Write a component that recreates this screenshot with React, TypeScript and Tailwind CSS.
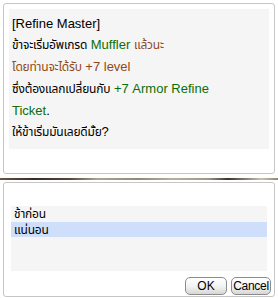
import React from 'react';

const font = {
  fontFamily: '"Liberation Sans", Arial, "Noto Sans Thai", "Noto Sans Thai UI", Loma, Garuda, "TlwgTypo", "Noto Sans", sans-serif',
};

// Thai runs come from a wider fallback face, so they are set a touch tighter
const Th: React.FC<{ children: React.ReactNode; className?: string }> = ({ children, className }) => (
  <span className={`text-[12px] tracking-[-0.2px] ${className ?? ''}`}>{children}</span>
);

const App: React.FC = () => {
  return (
    <div className="w-[278px] h-[298px] bg-white pt-[3px] select-none text-[13px] leading-[21px] text-black" style={font}>
      {/* dialogue panel */}
      <div className="mx-[3px] h-[171px] border border-[#c6c6c6] rounded-[3px] bg-white p-[5px]">
        <div className="h-[140px] bg-[#f5f5f5] px-[3px] pt-[4px]">
          <p>[Refine Master]</p>
          <p>
            <Th>ข้าจะเริ่มอัพเกรด</Th> <span className="text-[#0a6e0a]">Muffler</span>{' '}
            <Th className="text-[#8f4a1c]">แล้วนะ</Th>
          </p>
          <p className="text-[#8f4a1c]">
            <Th>โดยท่านจะได้รับ</Th> +7 level
          </p>
          <p>
            <Th>ซึ่งต้องแลกเปลี่ยนกับ</Th> <span className="text-[#0a6e0a]">+7 Armor Refine</span>
          </p>
          <p>
            <span className="text-[#0a6e0a]">Ticket</span>.
          </p>
          <p>
            <Th>ให้ข้าเริ่มมันเลยดีมั้ย</Th>?
          </p>
        </div>
      </div>

      {/* divider strip */}
      <div className="mt-[4px] h-[2px] bg-[linear-gradient(90deg,#6b5444_0%,#3a2b22_12%,#564437_25%,#a9a591_35%,#8e8a76_50%,#b4b09e_62%,#9c9886_75%,#3f3127_82%,#c7c3b2_94%,#8a8674_100%)]" />

      {/* menu panel */}
      <div className="mx-[3px] mt-[2px] h-[115px] border border-[#c6c6c6] rounded-[3px] bg-white px-[7px] pt-[23px] flex flex-col">
        <div className="h-[65px] bg-[#f5f5f5] leading-[15px]">
          <div className="h-[16px] px-[3px]">
            <Th>ช้าก่อน</Th>
          </div>
          <div className="h-[15px] px-[3px] bg-[#cfdffb]">
            <Th>แน่นอน</Th>
          </div>
        </div>
        <div className="flex justify-end gap-[4px] mt-[6px] -mr-[4px]">
          <button className="w-[42px] h-[18px] rounded-[5px] border border-[#8c8c8c] bg-[linear-gradient(180deg,#ffffff_0%,#f2f2f2_55%,#d6d6d6_100%)] text-[12px] leading-[16px] text-black">
            OK
          </button>
          <button className="w-[40px] h-[18px] px-0 rounded-[5px] border border-[#8c8c8c] bg-[linear-gradient(180deg,#ffffff_0%,#f2f2f2_55%,#d6d6d6_100%)] text-[12px] tracking-[-0.3px] leading-[16px] text-black">
            Cancel
          </button>
        </div>
      </div>
    </div>
  );
};

export default App;
